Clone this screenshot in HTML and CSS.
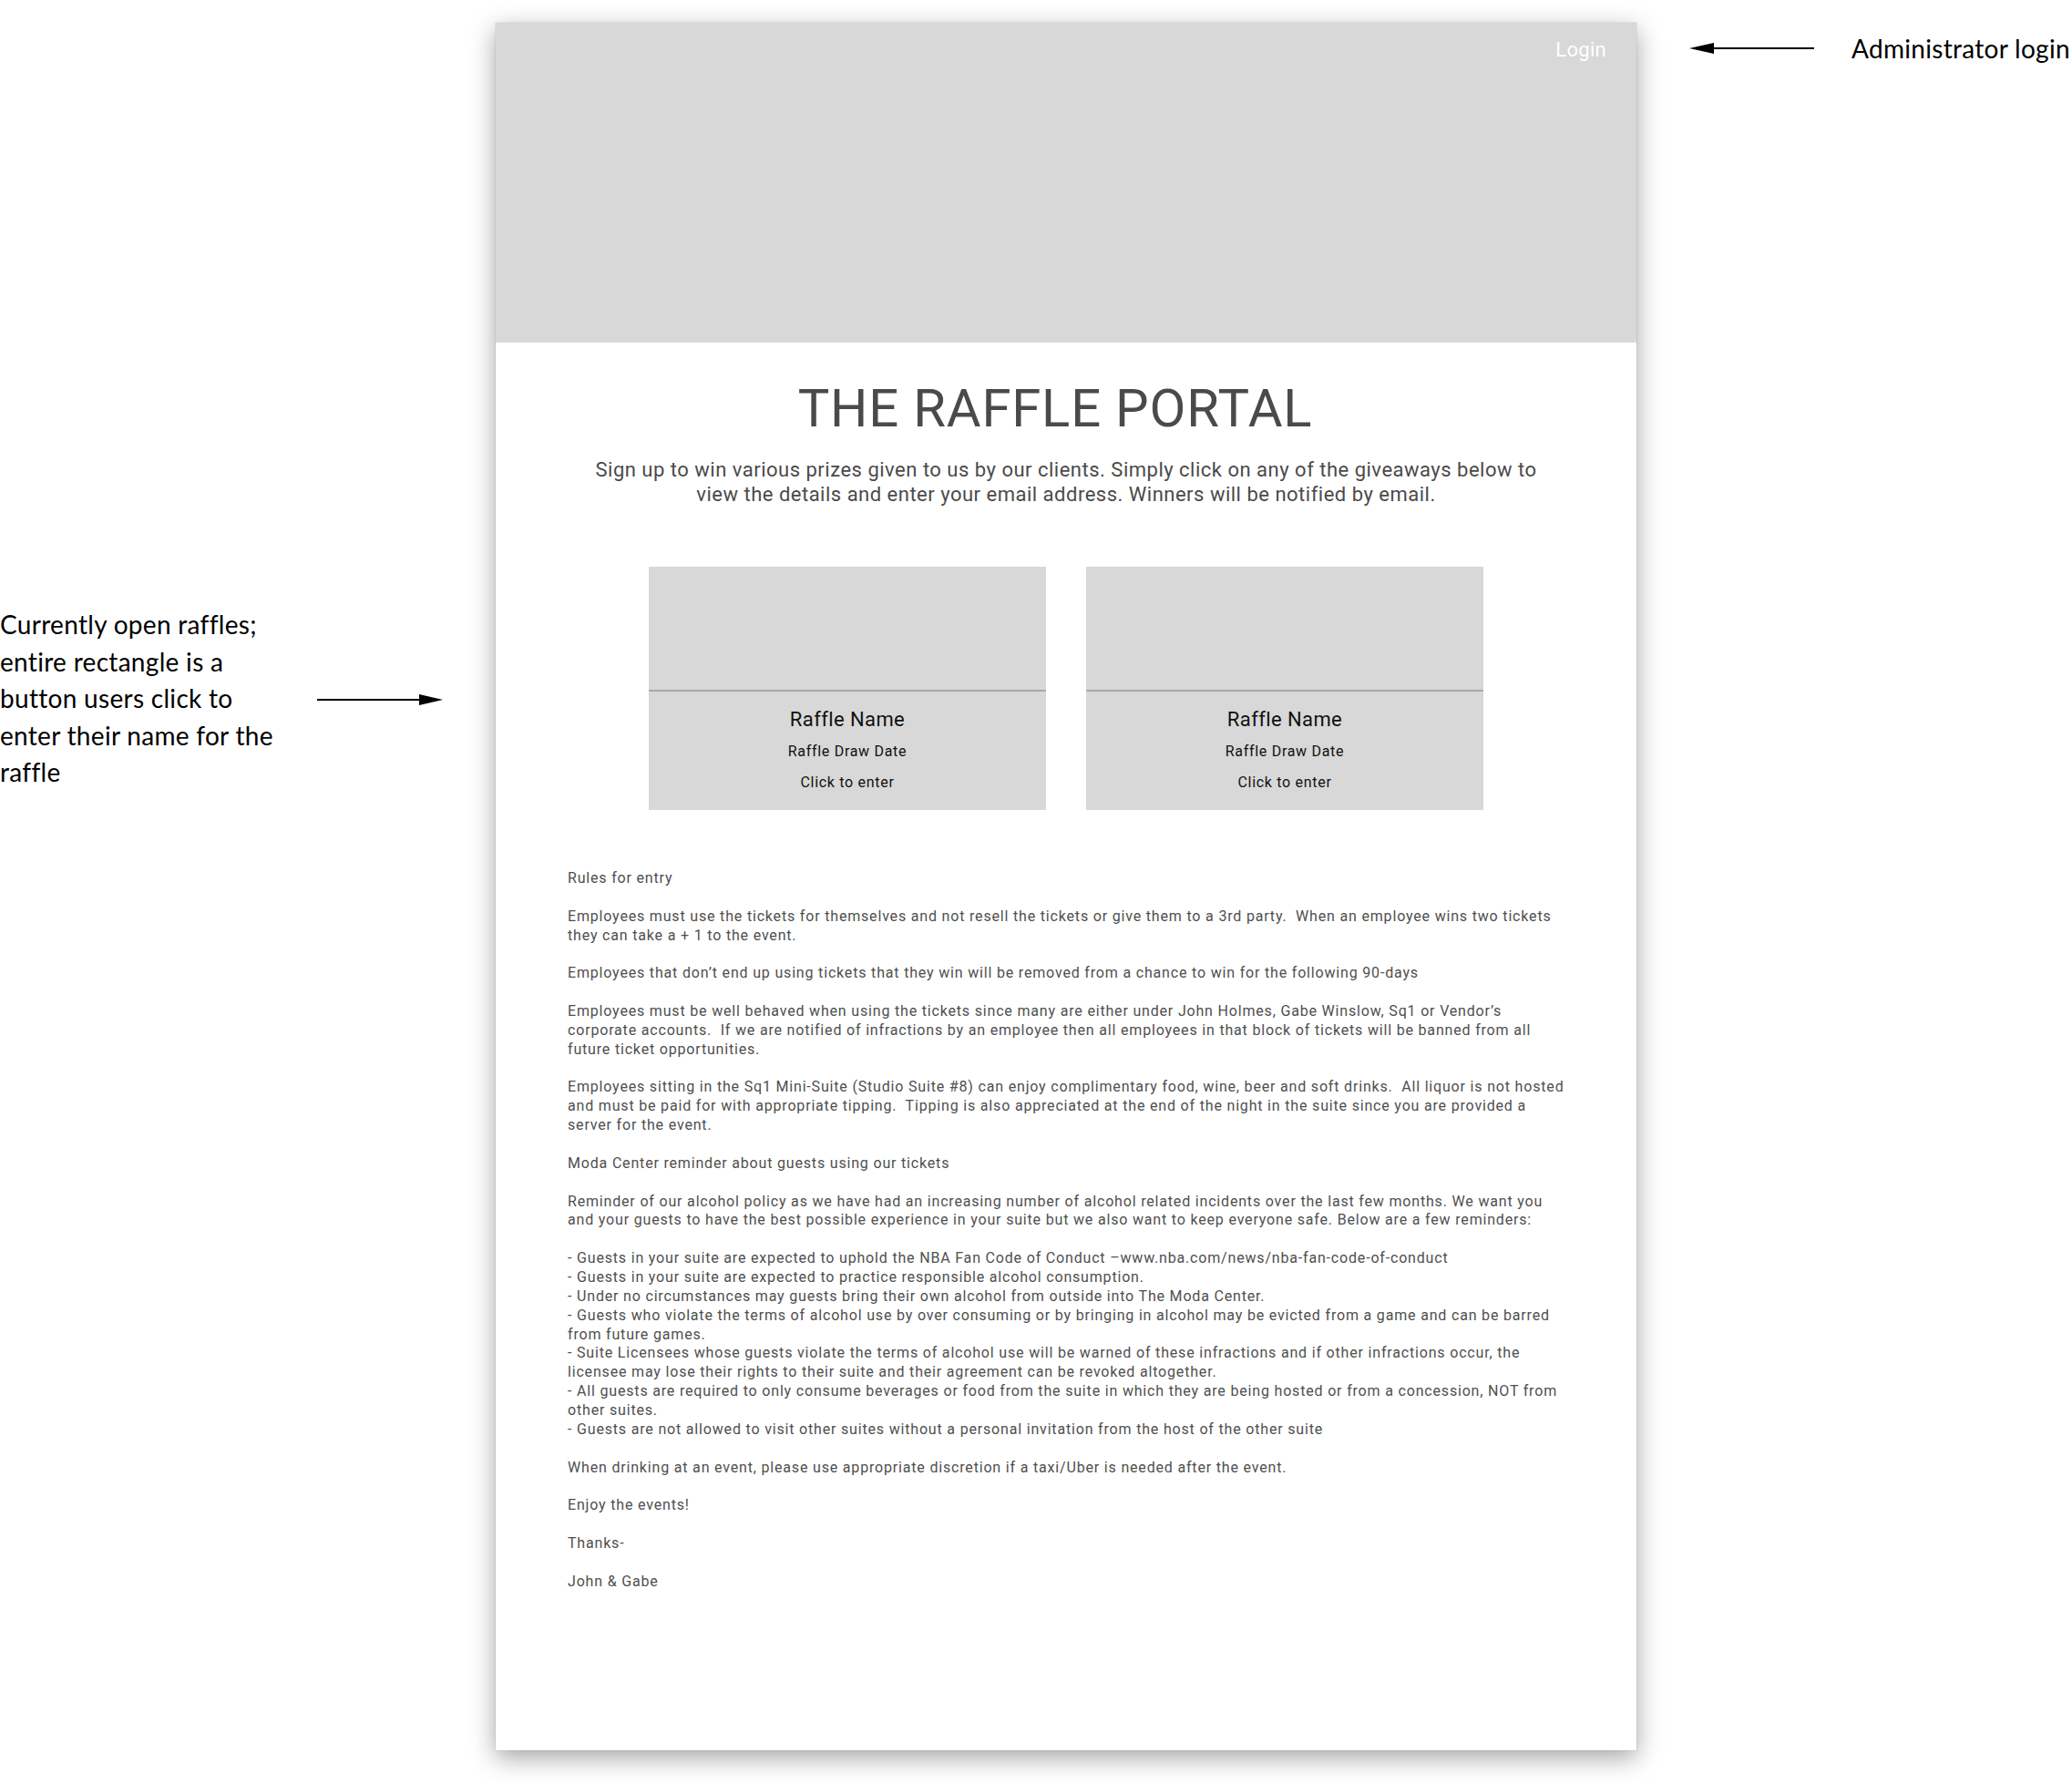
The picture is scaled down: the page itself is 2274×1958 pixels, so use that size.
FILE: index.html
```html
<!DOCTYPE html>
<html lang="en">
<head>
<meta charset="utf-8">
<title>The Raffle Portal – wireframe</title>
<link rel="stylesheet" href="styles.css">
</head>
<body>
<div class="canvas">
  <aside class="note note-left">
    <p class="note-text">Currently open raffles;<br>entire rectangle is a<br>button users click to<br>enter their name for the<br>raffle</p>
    <svg class="arrow" width="138" height="14" viewBox="0 0 138 14" aria-hidden="true">
      <line x1="0" y1="7" x2="116" y2="7" stroke="#000" stroke-width="2"/>
      <polygon points="112,1 138,7 112,13" fill="#000"/>
    </svg>
  </aside>

  <main class="page">
    <header class="hero">
      <a class="login" href="#">Login</a>
    </header>

    <section class="intro">
      <h1 class="title">THE RAFFLE PORTAL</h1>
      <p class="lead">Sign up to win various prizes given to us by our clients. Simply click on any of the giveaways below to<br>view the details and enter your email address. Winners will be notified by email.</p>
    </section>

    <section class="raffles">
      <a class="raffle" href="#">
        <div class="raffle-image"></div>
        <div class="raffle-info">
          <h2 class="raffle-name">Raffle Name</h2>
          <p class="raffle-date">Raffle Draw Date</p>
          <p class="raffle-cta">Click to enter</p>
        </div>
      </a>
      <a class="raffle" href="#">
        <div class="raffle-image"></div>
        <div class="raffle-info">
          <h2 class="raffle-name">Raffle Name</h2>
          <p class="raffle-date">Raffle Draw Date</p>
          <p class="raffle-cta">Click to enter</p>
        </div>
      </a>
    </section>

    <section class="rules">
      <p>Rules for entry</p>
      <p>Employees must use the tickets for themselves and not resell the tickets or give them to a 3rd party.&nbsp; When an employee wins two tickets<br>they can take a + 1 to the event.</p>
      <p>Employees that don’t end up using tickets that they win will be removed from a chance to win for the following 90-days</p>
      <p>Employees must be well behaved when using the tickets since many are either under John Holmes, Gabe Winslow, Sq1 or Vendor’s<br>corporate accounts.&nbsp; If we are notified of infractions by an employee then all employees in that block of tickets will be banned from all<br>future ticket opportunities.</p>
      <p>Employees sitting in the Sq1 Mini-Suite (Studio Suite #8) can enjoy complimentary food, wine, beer and soft drinks.&nbsp; All liquor is not hosted<br>and must be paid for with appropriate tipping.&nbsp; Tipping is also appreciated at the end of the night in the suite since you are provided a<br>server for the event.</p>
      <p>Moda Center reminder about guests using our tickets</p>
      <p>Reminder of our alcohol policy as we have had an increasing number of alcohol related incidents over the last few months. We want you<br>and your guests to have the best possible experience in your suite but we also want to keep everyone safe. Below are a few reminders:</p>
      <p>- Guests in your suite are expected to uphold the NBA Fan Code of Conduct –www.nba.com/news/nba-fan-code-of-conduct<br>- Guests in your suite are expected to practice responsible alcohol consumption.<br>- Under no circumstances may guests bring their own alcohol from outside into The Moda Center.<br>- Guests who violate the terms of alcohol use by over consuming or by bringing in alcohol may be evicted from a game and can be barred<br>from future games.<br>- Suite Licensees whose guests violate the terms of alcohol use will be warned of these infractions and if other infractions occur, the<br>licensee may lose their rights to their suite and their agreement can be revoked altogether.<br>- All guests are required to only consume beverages or food from the suite in which they are being hosted or from a concession, NOT from<br>other suites.<br>- Guests are not allowed to visit other suites without a personal invitation from the host of the other suite</p>
      <p>When drinking at an event, please use appropriate discretion if a taxi/Uber is needed after the event.</p>
      <p>Enjoy the events!</p>
      <p>Thanks-</p>
      <p>John &amp; Gabe</p>
    </section>
  </main>

  <aside class="note note-right">
    <svg class="arrow" width="137" height="14" viewBox="0 0 137 14" aria-hidden="true">
      <polygon points="0,7 27,1 27,13" fill="#000"/>
      <line x1="24" y1="7" x2="137" y2="7" stroke="#000" stroke-width="2"/>
    </svg>
    <span class="note-label">Administrator login</span>
  </aside>
</div>
</body>
</html>
```

FILE: styles.css
```css
html, body {
  margin: 0;
  padding: 0;
  background: #ffffff;
  overflow: hidden;
}

.canvas {
  display: flex;
  align-items: flex-start;
  width: 2274px;
  height: 1958px;
}

/* ---------- annotations ---------- */
.note {
  font-family: "Lato", "Liberation Sans", sans-serif;
  color: #000;
  font-size: 28px;
  line-height: 40.6px;
  letter-spacing: 0.3px;
}

.note-left {
  width: 544px;
  flex: 0 0 544px;
  display: flex;
  align-items: center;
  padding-top: 665px;
}

.note-text {
  margin: 0;
  width: 348px;
  flex: 0 0 348px;
  white-space: nowrap;
}

.note-left .arrow {
  display: block;
  flex: 0 0 auto;
  margin-top: 3px;
}

.note-right {
  flex: 1 1 auto;
  display: flex;
  align-items: center;
  padding-top: 33px;
  padding-left: 58px;
  gap: 41px;
  white-space: nowrap;
}

.note-right .arrow {
  display: block;
  flex: 0 0 auto;
}

.note-label {
  display: block;
  line-height: 40px;
}

/* ---------- page card ---------- */
.page {
  flex: 0 0 1252px;
  width: 1252px;
  height: 1896px;
  margin-top: 25px;
  background: #fff;
  box-shadow: 0 8px 26px rgba(0, 0, 0, 0.36), 0 0 0 1px rgba(0, 0, 0, 0.05);
  font-family: "Roboto", "Liberation Sans", sans-serif;
  color: #4a4a4a;
  display: flex;
  flex-direction: column;
}

.hero {
  height: 351px;
  background: #d8d8d8;
  display: flex;
  justify-content: flex-end;
  align-items: flex-start;
  padding: 17px 33px 0 0;
  box-sizing: border-box;
}

.login {
  color: #ffffff;
  text-decoration: none;
  font-size: 22px;
  line-height: 26px;
  letter-spacing: 0.3px;
}

.intro {
  text-align: center;
  padding-top: 38px;
}

.title {
  margin: 0;
  padding-right: 24px;
  font-size: 58px;
  line-height: 68px;
  font-weight: 400;
  letter-spacing: 0.8px;
  color: #4a4a4a;
}

.lead {
  margin: 20px 0 0;
  font-size: 22px;
  line-height: 27px;
  letter-spacing: 0.5px;
  color: #4a4a4a;
}

/* ---------- raffle cards ---------- */
.raffles {
  display: flex;
  justify-content: center;
  gap: 44px;
  margin-top: 66px;
}

.raffle {
  width: 436px;
  height: 267px;
  background: #d8d8d8;
  display: flex;
  flex-direction: column;
  text-decoration: none;
  color: #111;
}

.raffle-image {
  height: 135px;
  border-bottom: 2px solid #a8a8a8;
}

.raffle-info {
  text-align: center;
  padding-top: 18px;
}

.raffle-name {
  margin: 0;
  font-size: 22px;
  line-height: 26px;
  font-weight: 400;
  letter-spacing: 0.4px;
}

.raffle-date {
  margin: 11.5px 0 0;
  font-size: 16px;
  line-height: 20px;
  letter-spacing: 0.7px;
}

.raffle-cta {
  margin: 14.5px 0 0;
  font-size: 16px;
  line-height: 20px;
  letter-spacing: 0.7px;
}

/* ---------- rules text ---------- */
.rules {
  margin-top: 65px;
  padding: 0 79px;
  font-size: 16px;
  line-height: 20.86px;
  letter-spacing: 0.82px;
  color: #4f4f4f;
  white-space: nowrap;
}

.rules p {
  margin: 0 0 20.86px;
}
```
